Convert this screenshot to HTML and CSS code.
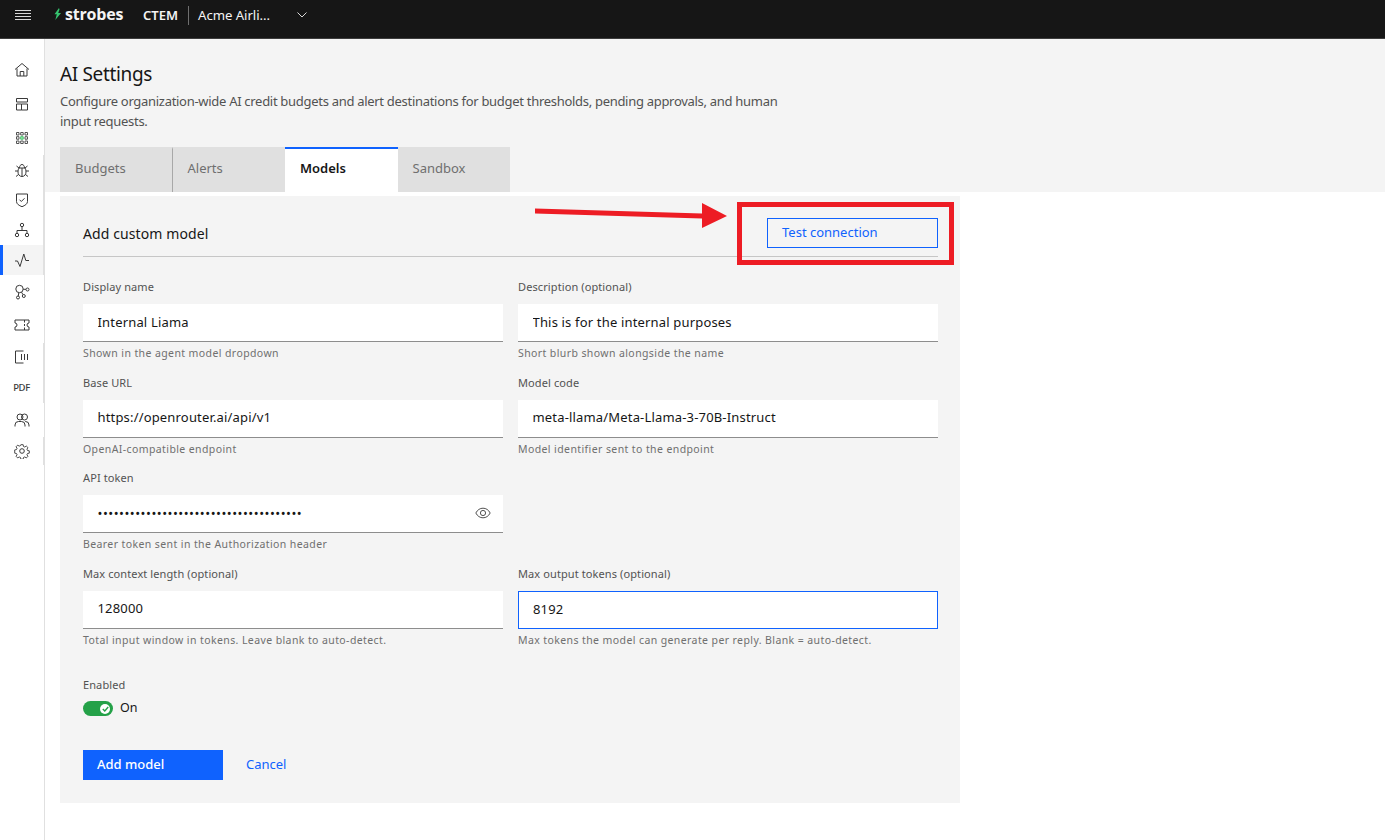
FILE: index.html
```html
<!DOCTYPE html>
<html lang="en">
<head>
  <meta charset="UTF-8" />
  <meta name="viewport" content="width=device-width, initial-scale=1.0" />
  <title>AI Settings - Strobes</title>
  <link rel="stylesheet" href="styles.css">
</head>
<body>
  <header class="topbar">
    <button class="menu-btn" type="button" aria-label="Menu">
      <svg width="16" height="12" viewBox="0 0 16 12"><path d="M0 1.500h16M0 4.500h16M0 7.500h16M0 10.500h16" stroke="#d8d8d8" stroke-width="1" fill="none"/></svg>
    </button>
    <div class="logo">
      <svg width="9" height="12" viewBox="0 0 9 12"><path d="M6 0 1.500 6.300h2.300L2.300 12 8 5H5.200L6.500 1.500z" fill="#35c46f"/></svg>
      <span class="logo-text">strobes</span>
    </div>
    <span class="product">CTEM</span>
    <span class="top-divider"></span>
    <span class="org">Acme Airli...</span>
    <svg class="org-chevron" width="10" height="6" viewBox="0 0 10 6"><path d="M.5.5 5 5 9.500.5" stroke="#d8d8d8" fill="none"/></svg>
  </header>

  <div class="shell">
    <nav class="sidebar">
      <a class="nav-item"><svg viewBox="0 0 16 16"><path d="M1 7.500 8 1.500l7 6M3 6.500V14h10V6.500M6.200 14V9.500h3.600V14"/></svg></a>
      <a class="nav-item"><svg viewBox="0 0 16 16"><path d="M2.500 2.500h11v3.500h-11zM2.500 8h5v6h-5zM7.500 8h6v6h-6z"/></svg></a>
      <a class="nav-item"><svg viewBox="0 0 16 16"><path class="dots" d="M2.500 2.500h2.500v2.500H2.500zM6.700 2.500h2.500v2.500H6.700zM11 2.500h2.500v2.500H11zM2.500 6.700h2.500v2.500H2.500zM11 6.700h2.500v2.500H11zM2.500 11h2.500v2.500H2.500zM6.700 11h2.500v2.500H6.700zM11 11h2.500v2.500H11z"/><path class="dot-on" d="M6.700 6.700h2.500v2.500H6.700z"/></svg></a>
      <a class="nav-item"><svg viewBox="0 0 16 16"><path d="M5 6h6c.8 1 1 2.500 1 4 0 2.500-1.500 4.500-4 4.500S4 12.500 4 10c0-1.500.2-3 1-4zM5.500 6c0-2 1-3.500 2.500-3.500S10.500 4 10.500 6M8 6v8.500M4 9H1M12 9h3M4.500 12.500l-2.500 2M11.500 12.500l2.500 2M5 6 2.500 4M11 6l2.500-2"/></svg></a>
      <a class="nav-item"><svg viewBox="0 0 16 16"><path d="M2.500 2h11v7.500c0 2.500-2.500 4-5.500 5.200-3-1.200-5.500-2.700-5.500-5.200zM5.500 7.700 7.300 9.500l3.200-3.200"/></svg></a>
      <a class="nav-item"><svg viewBox="0 0 16 16"><circle cx="8" cy="3" r="1.700"/><circle cx="3" cy="13" r="1.700"/><circle cx="13" cy="13" r="1.700"/><path d="M8 4.700V8.500M3 11.300V8.500h10v2.800"/></svg></a>
      <a class="nav-item active"><svg viewBox="0 0 16 16"><path d="M1 9h2.500L6 14.500 9.800 2l2 6.500H15"/></svg></a>
      <a class="nav-item"><svg viewBox="0 0 16 16"><circle cx="5.500" cy="5" r="3.700"/><circle cx="13.500" cy="5.500" r="1.500"/><circle cx="4" cy="13.500" r="1.500"/><circle cx="9.800" cy="12" r="1.500"/><path d="M9.200 5.300h2.800M4.800 8.600l-.5 3.400M7.500 8.200l1.500 2.500"/></svg></a>
      <a class="nav-item"><svg viewBox="0 0 16 16"><path d="M1 3h14v3a2 2 0 0 0 0 4v3H1v-3a2 2 0 0 0 0-4zM10.500 3v2.500M10.500 7v2M10.500 10.500V13"/></svg></a>
      <a class="nav-item"><svg viewBox="0 0 16 16"><path d="M9.500 2H1.500v12h8M7.500 5v6M10.500 5v6M13.500 5v6" /></svg></a>
      <a class="nav-item nav-pdf">PDF</a>
      <a class="nav-item"><svg viewBox="0 0 16 16"><circle cx="6" cy="5" r="3"/><circle cx="10.500" cy="5" r="3"/><path d="M1 14.500V13a3.500 3.500 0 0 1 3.500-3.500h3A3.500 3.500 0 0 1 11 13v1.500M11 9.500h.5A3.500 3.500 0 0 1 15 13v1.500"/></svg></a>
      <a class="nav-item"><svg viewBox="0 0 16 16"><circle cx="8" cy="8" r="2.300"/><path d="M6.700 1h2.600l.4 2 1.400.6 1.700-1.100 1.800 1.800-1.100 1.700.6 1.400 2 .4v2.600l-2 .4-.6 1.400 1.100 1.700-1.800 1.800-1.700-1.100-1.400.6-.4 2H6.700l-.4-2-1.400-.6-1.700 1.100-1.800-1.800 1.100-1.700-.6-1.400-2-.4V6.800l2-.4.6-1.400-1.100-1.700 1.800-1.800 1.700 1.100 1.400-.6z" transform="translate(.8 .8) scale(.9)"/></svg></a>
    </nav>

    <main class="content">
      <section class="page-head">
        <h1>AI Settings</h1>
        <p class="page-desc">Configure organization-wide AI credit budgets and alert destinations for budget thresholds, pending approvals, and human input requests.</p>
        <div class="tabs">
          <a class="tab tab-split">Budgets</a>
          <a class="tab">Alerts</a>
          <a class="tab selected">Models</a>
          <a class="tab">Sandbox</a>
        </div>
      </section>

      <section class="panel">
        <div class="panel-head">
          <h2>Add custom model</h2>
          <button class="btn-outline" type="button">Test connection</button>
        </div>

        <form class="fields">
          <div class="field">
            <label>Display name</label>
            <input type="text" value="Internal Liama" />
            <div class="hint">Shown in the agent model dropdown</div>
          </div>
          <div class="field">
            <label>Description (optional)</label>
            <input type="text" value="This is for the internal purposes" />
            <div class="hint">Short blurb shown alongside the name</div>
          </div>
          <div class="field">
            <label>Base URL</label>
            <input type="text" value="https://openrouter.ai/api/v1" />
            <div class="hint">OpenAI-compatible endpoint</div>
          </div>
          <div class="field">
            <label>Model code</label>
            <input type="text" value="meta-llama/Meta-Llama-3-70B-Instruct" />
            <div class="hint">Model identifier sent to the endpoint</div>
          </div>
          <div class="field">
            <label>API token</label>
            <div class="token-wrap">
              <input class="token" type="password" value="sk-or-v1-internal-liama-token-00000000" />
              <svg class="eye" width="16" height="12" viewBox="0 0 16 12"><path d="M.8 6C2.500 2.800 5 1.200 8 1.200S13.500 2.800 15.200 6C13.500 9.200 11 10.800 8 10.800S2.500 9.200.8 6z"/><circle cx="8" cy="6" r="2.600"/></svg>
            </div>
            <div class="hint">Bearer token sent in the Authorization header</div>
          </div>
          <div class="field field-empty"></div>
          <div class="field">
            <label>Max context length (optional)</label>
            <input type="text" value="128000" />
            <div class="hint">Total input window in tokens. Leave blank to auto-detect.</div>
          </div>
          <div class="field">
            <label>Max output tokens (optional)</label>
            <input class="focused" type="text" value="8192" />
            <div class="hint">Max tokens the model can generate per reply. Blank = auto-detect.</div>
          </div>
        </form>

        <div class="enabled">
          <label>Enabled</label>
          <div class="toggle-row">
            <span class="toggle">
              <span class="knob"><svg width="7" height="6" viewBox="0 0 7 6"><path d="M.8 3 2.800 5 6.200 1" stroke="#24a148" stroke-width="1.400" fill="none"/></svg></span>
            </span>
            <span class="toggle-text">On</span>
          </div>
        </div>

        <div class="actions">
          <button class="btn-primary" type="button">Add model</button>
          <a class="btn-link">Cancel</a>
        </div>
      </section>
    </main>
  </div>

  <!-- red callout drawn over the screenshot -->
  <svg class="callout" width="1385" height="840" viewBox="0 0 1385 840">
    <path d="M535 208.500 702 213.500 702 203 727 216 702 228 702 218.500 535 213.500z" fill="#ed1c24"/>
    <rect x="739.500" y="204.500" width="212" height="58" fill="none" stroke="#ed1c24" stroke-width="5"/>
  </svg>
</body>
</html>
```

FILE: styles.css
```css
* {
  box-sizing: border-box;
}
html, body {
  height: 100%;
}
body {
  margin: 0;
  overflow: hidden;
  background: #fff;
  color: #161616;
  font-family: "Noto Sans", Arial, sans-serif;
  font-size: 14px;
}

/* top bar */
.topbar {
  display: flex;
  align-items: center;
  height: 39px;
  padding-bottom: 8px;
  background: #161616;
  border-bottom: 1px solid #3d3d3d;
  color: #f4f4f4;
}
.menu-btn {
  display: flex;
  width: 45px;
  padding: 0 0 0 1px;
  justify-content: center;
  background: none;
  border: none;
}
.logo {
  display: flex;
  align-items: center;
  gap: 3px;
  width: 90px;
  padding-left: 8px;
  margin-top: -3px;
}
.logo-text {
  font-family: "Open Sans", sans-serif;
  font-size: 16px;
  font-weight: 700;
  letter-spacing: -.2px;
  line-height: 18px;
}
.product {
  margin-left: 8px;
  font-size: 13px;
  font-weight: 600;
}
.top-divider {
  width: 1px;
  height: 19px;
  margin: 0 10px 0 10px;
  background: #6f6f6f;
}
.org {
  width: 104px;
  margin-left: -1px;
  font-size: 13.200px;
  letter-spacing: -.05px;
}
.org-chevron {
  margin-left: -5px;
}

/* side nav */
.shell {
  display: flex;
  height: calc(100% - 39px);
}
.sidebar {
  display: grid;
  flex: 0 0 45px;
  grid-template-rows: 14px 34px 34.5px 33px 30.5px 30.5px 29.5px 30px 33.5px 32.5px 31px 31.5px 32px 31.5px;
  grid-auto-rows: 30px;
  background: linear-gradient(#fff 116px, #e0e0e0 116px, #e0e0e0 236px, #fff 236px, #fff 304px, #e0e0e0 304px, #e0e0e0 364px, #fff 364px, #fff 398px, #e0e0e0 398px, #e0e0e0 426px, #fff 426px) right top / 1px 100% no-repeat, #fff;
  border-right: 1px solid #e0e0e0;
}
.sidebar::before {
  content: "";
}
.nav-item {
  display: flex;
  align-items: center;
  justify-content: center;
  width: 43px;
}
.nav-item svg {
  width: 16px;
  height: 16px;
  fill: none;
  stroke: #393939;
  stroke-width: 1;
}
.nav-item .dots {
  stroke: #525252;
}
.nav-item .dot-on {
  fill: #a7f0ba;
  stroke: #42be65;
}
.nav-item.active {
  background: #f4f4f4;
  box-shadow: inset 3px 0 0 #0f62fe;
}
.nav-pdf {
  color: #393939;
  font-size: 9.500px;
  font-weight: 500;
  letter-spacing: -.4px;
}

/* page heading */
.content {
  flex: 1;
}
.page-head {
  height: 153px;
  padding: 23px 15px 0;
  background: #f4f4f4;
}
h1 {
  margin: 0;
  font-size: 19px;
  font-weight: 400;
  letter-spacing: -.35px;
  line-height: 24px;
}
.page-desc {
  width: 740px;
  margin: 5px 0 0;
  color: #525252;
  font-size: 13px;
  letter-spacing: -.295px;
  line-height: 20px;
}
.tabs {
  display: flex;
  margin-top: 16px;
}
.tab {
  width: 112.5px;
  height: 45px;
  padding: 10px 15px 0;
  background: #e0e0e0;
  border-top: 2px solid #e0e0e0;
  color: #6f6f6f;
  font-size: 13px;
  line-height: 18px;
}
.tab-split {
  border-right: 1px solid #a8a8a8;
}
.tab.selected {
  background: #fff;
  border-top-color: #0f62fe;
  color: #161616;
  font-weight: 600;
}

/* form card */
.panel {
  width: 900px;
  height: 607px;
  margin: 4px 0 0 15px;
  padding: 22px 22px 0 23px;
  background: #f4f4f4;
}
.panel-head {
  display: flex;
  align-items: flex-start;
  justify-content: space-between;
  height: 39px;
  border-bottom: 1px solid #c6c6c6;
}
h2 {
  margin: 7px 0 0;
  font-size: 14px;
  font-weight: 400;
  letter-spacing: .1px;
  line-height: 18px;
}
.btn-outline {
  width: 171px;
  height: 30px;
  padding: 0 14px 2px;
  background: none;
  border: 1px solid #0f62fe;
  color: #0f62fe;
  font: inherit;
  font-size: 13px;
  text-align: left;
}
.fields {
  display: grid;
  grid-template-columns: 420px 420px;
  grid-auto-rows: 83px;
  column-gap: 15px;
  row-gap: 12.5px;
  margin-top: 22px;
}
label {
  display: block;
  margin-bottom: 10px;
  color: #525252;
  font-size: 11px;
  letter-spacing: .1px;
  line-height: 15px;
}
input {
  display: block;
  width: 100%;
  height: 38px;
  padding: 0 15px 2px 14.5px;
  background: #fff;
  border: none;
  border-bottom: 1px solid #8d8d8d;
  border-radius: 0;
  color: #161616;
  font: inherit;
  font-size: 13px;
  letter-spacing: .17px;
  outline: none;
}
input.token {
  letter-spacing: .5px;
}
input.focused {
  border: 1px solid #0f62fe;
  padding-left: 14px;
}
.hint {
  margin-top: 3px;
  color: #6f6f6f;
  font-size: 10.5px;
  letter-spacing: .4px;
  line-height: 16px;
}
.token-wrap {
  position: relative;
}
.eye {
  position: absolute;
  top: 12px;
  right: 12px;
  fill: none;
  stroke: #525252;
}

/* toggle and buttons */
.enabled {
  margin-top: 28.5px;
}
.enabled label {
  margin-bottom: 9px;
}
.toggle-row {
  display: flex;
  align-items: center;
  gap: 7px;
  height: 15px;
}
.toggle {
  display: flex;
  align-items: center;
  justify-content: flex-end;
  width: 30px;
  height: 15px;
  padding-right: 3px;
  background: #24a148;
  border-radius: 8px;
}
.knob {
  display: flex;
  align-items: center;
  justify-content: center;
  width: 10px;
  height: 10px;
  background: #fff;
  border-radius: 50%;
}
.toggle-text {
  padding-bottom: 3px;
  font-size: 12.5px;
  line-height: 15px;
}
.actions {
  display: flex;
  align-items: center;
  gap: 23px;
  margin-top: 34px;
}
.btn-primary {
  width: 140px;
  height: 30px;
  padding: 0 14px 2px;
  background: #0f62fe;
  border: none;
  color: #fff;
  font: inherit;
  font-size: 13px;
  font-weight: 500;
  text-align: left;
}
.btn-link {
  padding-bottom: 2px;
  color: #0f62fe;
  font-size: 13px;
}

/* annotation */
.callout {
  position: absolute;
  top: 0;
  left: 0;
  pointer-events: none;
}
```
